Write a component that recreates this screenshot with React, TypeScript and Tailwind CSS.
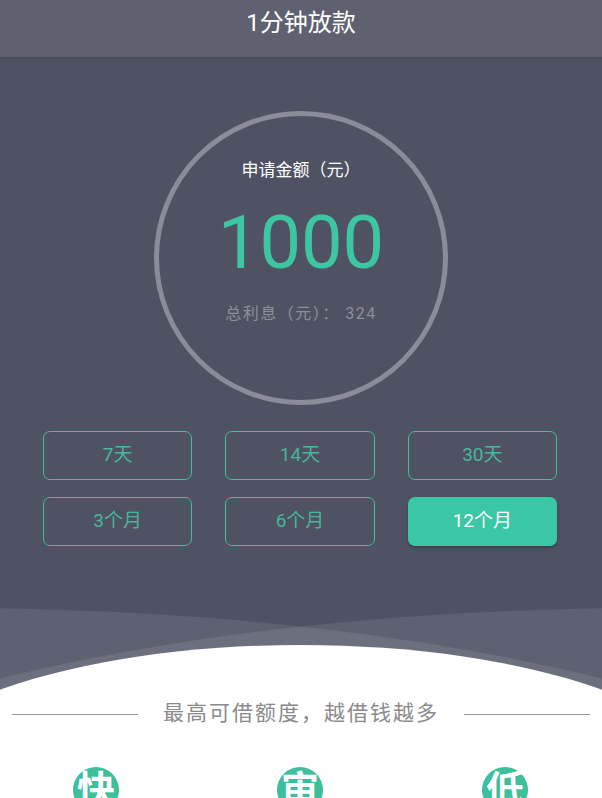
const periods = [
  { label: "7天", active: false },
  { label: "14天", active: false },
  { label: "30天", active: false },
  { label: "3个月", active: false },
  { label: "6个月", active: false },
  { label: "12个月", active: true },
];

const features = ["快", "审", "低"];

export default function App() {
  return (
    <div
      className="w-[602px] h-[798px] overflow-hidden bg-white"
      style={{ fontFamily: "Roboto, 'Noto Sans CJK SC', sans-serif" }}
    >
      {/* header */}
      <div className="h-[57px] bg-[#5f6171] flex items-center justify-center shadow-[0_1px_2px_rgba(0,0,0,0.15)] relative z-10">
        <h1 className="text-[24px] text-white leading-none -mt-[12px]">1分钟放款</h1>
      </div>

      {/* amount panel */}
      <div className="bg-[#4f5263] pt-[54px] pb-[55px]">
        <div className="mx-auto w-[294px] h-[294px] rounded-full border-[5px] border-[#8a8c99] flex flex-col items-center pt-[43px]">
          <p className="text-[17px] leading-[22px] text-white">申请金额（元）</p>
          <p className="mt-[25px] text-[74px] leading-none text-[#3cc7a2]">1000</p>
          <p className="mt-[24px] text-[16px] leading-[20px] text-[#8d8f9b] tracking-[1.5px]">总利息（元）： 324</p>
        </div>

        <div className="mt-[26px] pl-[43px] pr-[45px] grid grid-cols-3 gap-x-[33px] gap-y-[17px]">
          {periods.map((p) => (
            <button
              key={p.label}
              className={
                p.active
                  ? "h-[49px] rounded-[7px] bg-[#3ac7a4] text-white text-[19px] shadow-[0_2px_3px_rgba(0,0,0,0.25)]"
                  : "h-[49px] rounded-[7px] border-[1.5px] border-[#43bca0] text-[#47b69c] text-[19px]"
              }
            >
              {p.label}
            </button>
          ))}
        </div>
      </div>

      {/* waves */}
      <svg
        className="block w-[602px] h-[100px] bg-[#4f5263] -mt-px"
        viewBox="0 0 602 100"
        preserveAspectRatio="none"
      >
        <ellipse cx="-50" cy="300" rx="1000" ry="292" fill="#ffffff" fillOpacity="0.09" />
        <ellipse cx="652" cy="300" rx="1000" ry="292" fill="#ffffff" fillOpacity="0.09" />
        <ellipse cx="301" cy="193" rx="420" ry="148" fill="#ffffff" />
      </svg>

      {/* bottom section */}
      <div className="bg-white">
        <div className="flex items-center h-[28px]">
          <div className="ml-[12px] w-[126px] h-px bg-[#9a9a9a]" />
          <p className="flex-1 text-center text-[21px] text-[#8a8a8a] tracking-[2px]">
            最高可借额度，越借钱越多
          </p>
          <div className="mr-[12px] w-[126px] h-px bg-[#9a9a9a]" />
        </div>

        <div className="mt-[39px] flex">
          {features.map((f, i) => (
            <div
              key={f}
              className={
                i === 0
                  ? "ml-[73px] w-[46px] h-[46px] rounded-full bg-[#3dbf9c] flex items-center justify-center"
                  : i === 1
                  ? "ml-[158px] w-[46px] h-[46px] rounded-full bg-[#3dbf9c] flex items-center justify-center"
                  : "ml-[159px] w-[46px] h-[46px] rounded-full bg-[#3dbf9c] flex items-center justify-center"
              }
            >
              <span className="text-[38px] leading-none font-bold text-white">{f}</span>
            </div>
          ))}
        </div>
      </div>
    </div>
  );
}
